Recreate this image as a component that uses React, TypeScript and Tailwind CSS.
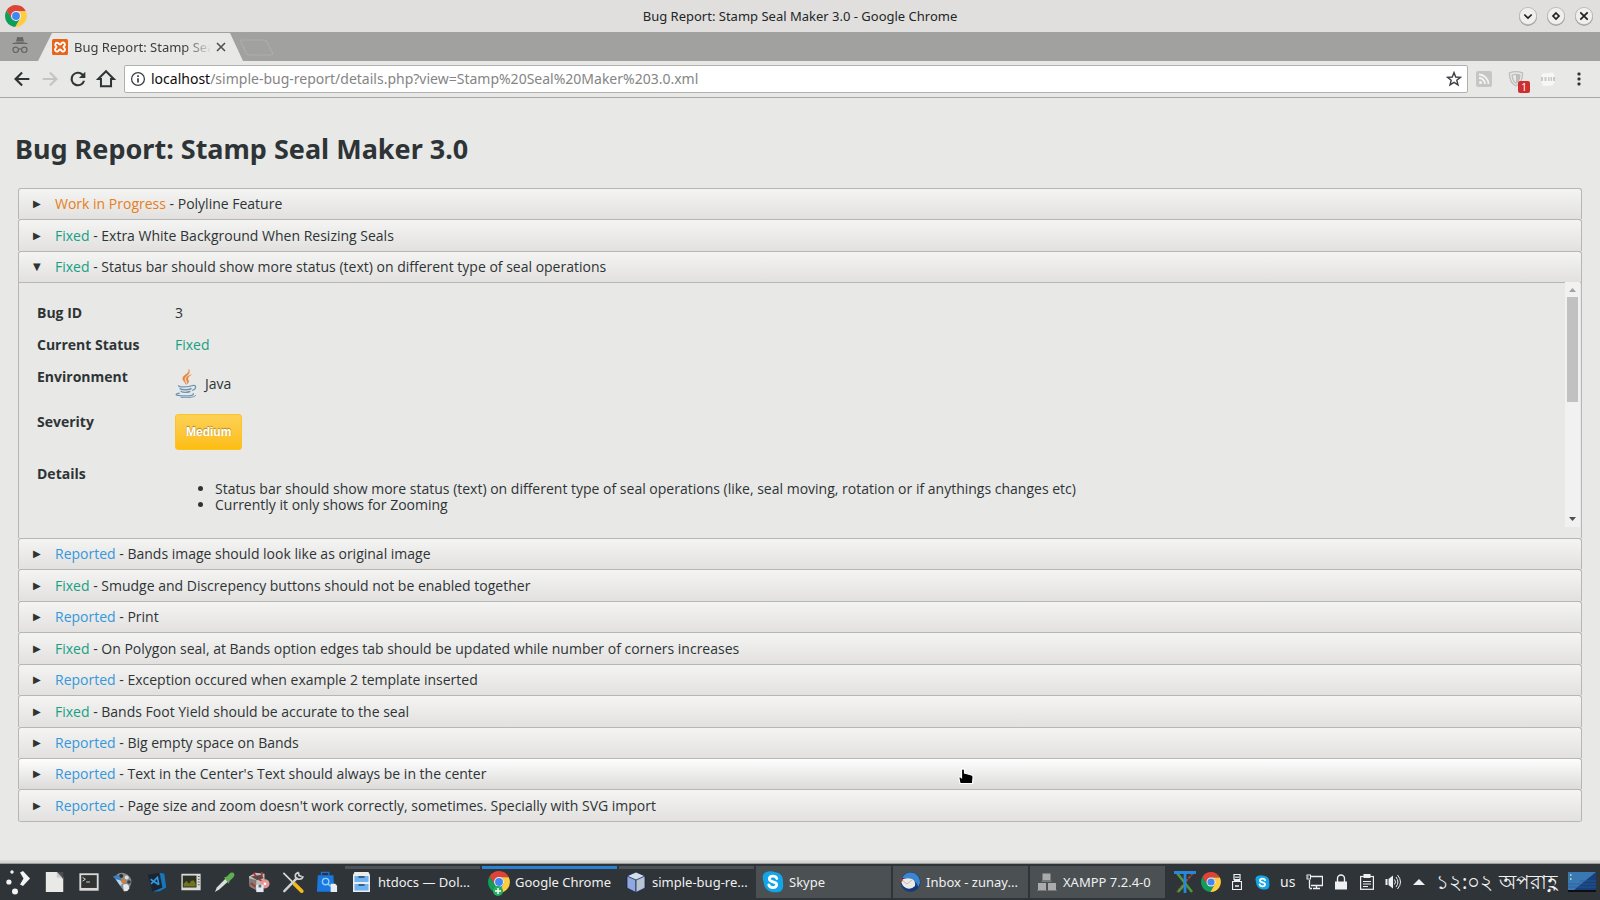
import { useState, type ReactNode } from 'react';

type Status = 'Work in Progress' | 'Fixed' | 'Reported';

const STATUS_COLOR: Record<Status, string> = {
  'Work in Progress': 'text-[#e67e22]',
  Fixed: 'text-[#16a085]',
  Reported: 'text-[#3498db]',
};

const BUGS: { status: Status; title: string }[] = [
  { status: 'Work in Progress', title: 'Polyline Feature' },
  { status: 'Fixed', title: 'Extra White Background When Resizing Seals' },
  { status: 'Fixed', title: 'Status bar should show more status (text) on different type of seal operations' },
  { status: 'Reported', title: 'Bands image should look like as original image' },
  { status: 'Fixed', title: 'Smudge and Discrepency buttons should not be enabled together' },
  { status: 'Reported', title: 'Print' },
  { status: 'Fixed', title: 'On Polygon seal, at Bands option edges tab should be updated while number of corners increases' },
  { status: 'Reported', title: 'Exception occured when example 2 template inserted' },
  { status: 'Fixed', title: 'Bands Foot Yield should be accurate to the seal' },
  { status: 'Reported', title: 'Big empty space on Bands' },
  { status: 'Reported', title: "Text in the Center's Text should always be in the center" },
  { status: 'Reported', title: "Page size and zoom doesn't work correctly, sometimes. Specially with SVG import" },
];

const HOVERED = 10;
const TALL_ROWS = [1, 4, 6, 8, 11];

function ChromeLogo({ className }: { className: string }) {
  return (
    <svg viewBox="0 0 48 48" className={className} aria-hidden="true">
      <path d="M24 0 A24 24 0 0 1 45.5 13.4 L24 13.4 L14 29.5 L3.2 12 A24 24 0 0 1 24 0Z" fill="#dd4437" />
      <path d="M3.2 12 A24 24 0 0 0 22.5 47.9 L33 29.5 L24 34.5 L15 29.5 Z" fill="#109d59" />
      <path d="M45.3 13.4 A24 24 0 0 1 22.5 47.9 L33.5 29 L33 18 L24 13.4 Z" fill="#fece40" />
      <circle cx="24" cy="24" r="10.8" fill="#f1f1f1" />
      <circle cx="24" cy="24" r="8.6" fill="#4286f5" />
    </svg>
  );
}

function JavaLogo() {
  return (
    <svg viewBox="0 0 22 30" className="h-[29px] w-[22px]" fill="none" strokeLinecap="round" aria-hidden="true">
      <path d="M14 0.500c2 4-6.400 5.500-6.400 9.300 0 2.400 2.400 3.400 3.400 6.200-.2-3-1.800-4-1.500-6C10 7.200 16.500 5.500 14 .5Z" fill="#e8833a" stroke="#e8833a" strokeWidth="0.500" />
      <path d="M16.200 6c-3.400 1.200-5.800 2.800-5 5.200.5 1.500 1.800 2 .6 4.600 3-2.400 1.800-4 1.200-5-.8-1.600.8-3 3.200-4.800Z" fill="#e8833a" stroke="#e8833a" strokeWidth="0.400" />
      <path d="M3.400 17.200c-1 1.600 10.600 1.800 13.400 0.200" stroke="#6f97b5" strokeWidth="1.300" />
      <path d="M17.600 17.200c4.600-1.400 4.400 3.600 0 4.800" stroke="#6f97b5" strokeWidth="1.300" />
      <path d="M5 20.400c1.400 1.400 8.600 1.400 11 0" stroke="#6f97b5" strokeWidth="1.700" />
      <path d="M6 23.300c1.600 1.200 6.600 1.200 9 0" stroke="#6f97b5" strokeWidth="1.500" />
      <path d="M4 25c-6.600 1.600-2 2.800 6 2.800 6 0 9.600-0.800 8.400-2.200" stroke="#6f97b5" strokeWidth="1.400" />
      <path d="M6 29.400c6 0.600 13.500 0.200 15-2" stroke="#6f97b5" strokeWidth="1" />
    </svg>
  );
}

function SkypeIcon({ className }: { className: string }) {
  return (
    <svg viewBox="0 0 24 24" className={className} aria-hidden="true">
      <path d="M5 1Q9-.2 14 1c7 1 9.500 6 8.800 11C24 19 22 23.500 16 23.200 8 24 2 19 1.800 12 0 7 .5 2 5 1Z" fill="#12a5ea" />
      <path d="M16.200 8.200C15.400 6.400 13.900 5.700 12 5.700c-2.400 0-4 1.100-4 3 0 4.200 8 2.100 8 6 0 2.100-1.800 3.400-4.100 3.400-2.300 0-3.900-.9-4.500-3" fill="none" stroke="#fff" strokeWidth="3" strokeLinecap="round" />
    </svg>
  );
}

function TitleBar() {
  return (
    <header className="flex h-8 shrink-0 items-center bg-[#e0dfde] px-[5px] text-[#232627]">
      <div className="flex w-[90px]">
        <ChromeLogo className="size-[22px]" />
      </div>
      <div className="flex-1 text-center text-[13px] leading-5">Bug Report: Stamp Seal Maker 3.0 - Google Chrome</div>
      <div className="flex w-[90px] justify-end gap-2 pr-px">
        {[
          ['Minimize', 'M6.3 8.5 10 12l3.7-3.5'],
          ['Maximize', 'M10 7l3 3-3 3-3-3Z'],
          ['Close', 'M6.3 6.3l7.4 7.400M13.7 6.3l-7.4 7.400'],
        ].map(([label, d]) => (
          <button key={label} type="button" aria-label={label} className="size-5 cursor-pointer">
            <svg viewBox="0 0 20 20" className="size-5" fill="none">
              <circle cx="10" cy="10.7" r="9" fill="#8f8f8e" />
              <circle cx="10" cy="10" r="8.600" fill="#f0efee" stroke="#b9b8b7" strokeWidth="0.8" />
              <path d={d} stroke="#1d1f20" strokeWidth="1.7" />
            </svg>
          </button>
        ))}
      </div>
    </header>
  );
}

function TabStrip() {
  return (
    <div className="flex h-[29px] shrink-0 items-end bg-[#a1a19f]">
      <div className="flex h-full w-[38px] items-center justify-center pb-[3px]">
        <svg viewBox="0 0 18 18" className="ml-[2px] size-[18px]" fill="none" aria-hidden="true">
          <path d="M5 5.5 6.2 1h1.600l1.200.6L10.2 1h1.600L13 5.5ZM1 8c0-1.200 4-1.800 8-1.800S17 6.800 17 8Z" fill="#666" />
          <circle cx="4.700" cy="13.800" r="2.700" stroke="#666" strokeWidth="1.200" />
          <circle cx="13.300" cy="13.800" r="2.700" stroke="#666" strokeWidth="1.200" />
          <path d="M7.400 13.400q1.600-1 3.200 0" stroke="#666" strokeWidth="1.200" />
        </svg>
      </div>
      <div className="flex h-7 w-[205px] items-center bg-[#e8e8e6] pb-px pl-[14px] [clip-path:polygon(14px_0,calc(100%-13px)_0,100%_100%,0_100%)]">
        <svg viewBox="0 0 16 16" className="size-4" aria-hidden="true">
          <rect width="16" height="16" rx="1.500" fill="#e9651c" />
          <path d="M5.200 3.600a2 2 0 0 0-1 3.700q.5.700 0 1.400a2 2 0 1 0 2.800 2.200q1-.8 2 0a2 2 0 1 0 2.800-2.200q-.5-.7 0-1.400A2 2 0 1 0 9 5.100q-1 .8-2 0a2 2 0 0 0-1.800-1.500Z" fill="none" stroke="#fff" strokeWidth="1.900" />
        </svg>
        <span className="ml-[6px] w-[136px] overflow-hidden text-[13px] leading-5 whitespace-nowrap text-[#3a3d3f] [mask-image:linear-gradient(to_right,#000_110px,transparent_138px)]">
          Bug Report: Stamp Seal Maker 3.0
        </span>
        <button type="button" aria-label="Close tab" className="ml-[5px] flex size-3 items-center justify-center">
          <svg viewBox="0 0 10 10" className="size-[10px]">
            <path d="M1 1l8 8M9 1 1 9" stroke="#4e5153" strokeWidth="1.600" />
          </svg>
        </button>
      </div>
      <button type="button" aria-label="New tab" className="mb-1 -ml-1">
        <svg viewBox="0 0 36 18" className="h-[18px] w-9" fill="none">
          <path d="M3 1h22q2 0 3 2l5.500 11q1 2-1.500 2H10q-2 0-3-2L2 3Q1.500 1 3 1Z" stroke="#adadab" strokeWidth="1.200" />
        </svg>
      </button>
    </div>
  );
}

function ToolButton({ label, color, children }: { label: string; color: string; children: ReactNode }) {
  return (
    <button type="button" aria-label={label} className={`flex w-7 justify-center ${color}`}>
      <svg viewBox="0 0 24 24" className="size-[22px]" fill="currentColor">
        {children}
      </svg>
    </button>
  );
}

function Toolbar() {
  const arrowBack = 'M20 10.800H7.830l5.090-5.090L11.300 4 3.300 12l8 8 1.620-1.710-5.090-5.090H20z';
  return (
    <div className="flex h-[37px] shrink-0 items-center border-b border-[#a9a9a7] bg-[#e8e8e6] pr-[13px] pl-2">
      <ToolButton label="Back" color="text-[#2e3436]">
        <path d={arrowBack} />
      </ToolButton>
      <ToolButton label="Forward" color="text-[#c4c4c3]">
        <path d={arrowBack} transform="matrix(-1 0 0 1 24 0)" />
      </ToolButton>
      <ToolButton label="Reload" color="text-[#2e3436]">
        <path d="M17.650 6.350A8 8 0 1 0 19.730 14h-2.400A5.700 5.700 0 1 1 12 6.300c1.560 0 2.960.7 4.020 1.700L13 11h7V4z" />
      </ToolButton>
      <ToolButton label="Home" color="text-[#2e3436]">
        <path d="M12 3.500 3.500 12H6.500v8h11v-8h3Z" fill="none" stroke="currentColor" strokeWidth="2.200" />
      </ToolButton>
      <div className="ml-1 flex h-7 flex-1 items-center rounded-[2px] border border-[#b0b0ae] bg-white px-[5px]">
        <svg viewBox="0 0 16 16" className="size-4" fill="none" aria-hidden="true">
          <circle cx="8" cy="8" r="6.400" stroke="#3c4043" strokeWidth="1.300" />
          <path d="M8 7.200v4.300M8 4.300v1.600" stroke="#3c4043" strokeWidth="1.700" />
        </svg>
        <a
          href="http://localhost/simple-bug-report/details.php?view=Stamp%20Seal%20Maker%203.0.xml"
          className="ml-[5px] flex-1 text-[14px] leading-5 whitespace-nowrap text-[#858585]"
        >
          <span className="text-[#0c0c0c]">localhost</span>/simple-bug-report/details.php?view=Stamp%20Seal%20Maker%203.0.xml
        </a>
        <button type="button" aria-label="Bookmark this page">
          <svg viewBox="0 0 16 16" className="size-4" fill="none">
            <path d="M8 1.600 9.700 6l4.700.3-3.600 3 1.200 4.600L8 11.300l-4 2.600 1.200-4.600-3.600-3L6.300 6Z" stroke="#3c4043" strokeWidth="1.400" />
          </svg>
        </button>
      </div>
      <div className="flex items-center pl-2">
        <svg viewBox="0 0 16 16" className="size-4" fill="none" aria-hidden="true">
          <rect width="16" height="16" rx="2" fill="#c6c6c5" />
          <circle cx="4.500" cy="11.500" r="1.500" fill="#f4f4f4" />
          <path d="M3 7a6 6 0 0 1 6 6M3 3.500A9.500 9.500 0 0 1 12.500 13" stroke="#f4f4f4" strokeWidth="1.800" />
        </svg>
        <div className="relative ml-4 size-4">
          <svg viewBox="0 0 16 16" className="size-4" fill="none" aria-hidden="true">
            <path d="M1.500 1.800Q8-.4 14.500 1.800 15 11.500 8 15 1 11.500 1.500 1.800Z" stroke="#bdbdbc" strokeWidth="1.300" />
            <path d="M4.200 4Q8 2.800 11.800 4 12 9.500 8 12.300 4 9.500 4.200 4Z" stroke="#bdbdbc" strokeWidth="1.300" />
            <path d="M8 3.400v8.600Q11.800 9 11.700 4.200Z" fill="#bdbdbc" />
          </svg>
          <span className="absolute top-[10px] left-[10px] flex h-3 w-3 items-center justify-center rounded-[2px] bg-[#cf2e2e] text-[10px] leading-3 text-white">
            1
          </span>
        </div>
        <svg viewBox="0 0 16 16" className="ml-4 size-4" aria-hidden="true">
          <path d="M3 2.500 13 1.500 14.500 5v7L12 14.500 3 15 1.500 11V4Z" fill="#f7f7f6" />
          <path d="M1 6h2v4H1zM4.500 6h2v4h-2zM8 6h1.500v4H8zM10.500 6h1.500v4h-1.500zM13 6h2v4h-2z" fill="#c9c9c8" />
        </svg>
        <button type="button" aria-label="Menu" className="ml-[15px]">
          <svg viewBox="0 0 16 16" className="size-4" fill="#2e3436">
            <rect x="6.500" y="1.500" width="3" height="3" rx="1" />
            <rect x="6.500" y="6.500" width="3" height="3" rx="1" />
            <rect x="6.500" y="11.500" width="3" height="3" rx="1" />
          </svg>
        </button>
      </div>
    </div>
  );
}

function BugDetails() {
  return (
    <div className="flex h-[255px] border-x border-[#b6b6b4]">
      <dl className="grid h-[245px] flex-1 grid-cols-[138px_1fr] content-start gap-y-4 overflow-hidden pt-[22px] pl-[18px] text-sm leading-4">
        <dt className="font-bold">Bug ID</dt>
        <dd>3</dd>
        <dt className="font-bold">Current Status</dt>
        <dd className="text-[#16a085]">Fixed</dd>
        <dt className="font-bold">Environment</dt>
        <dd className="flex items-center gap-2">
          <JavaLogo />
          Java
        </dd>
        <dt className="font-bold">Severity</dt>
        <dd>
          <button
            type="button"
            className="block h-9 rounded-[3px] border border-[#fcc322] bg-linear-to-b from-[#fdd153] to-[#fdbd08] px-[10px] font-['Liberation_Sans',sans-serif] text-xs font-bold text-white [text-shadow:0_-1px_1px_rgba(0,0,0,0.35)]"
          >
            Medium
          </button>
        </dd>
        <dt className="font-bold">Details</dt>
        <dd>
          <ul className="list-disc pt-[15px] pl-10">
            <li>
              Status bar should show more status (text) on different type of seal operations (like, seal moving, rotation or if
              anythings changes etc)
            </li>
            <li>Currently it only shows for Zooming</li>
          </ul>
        </dd>
      </dl>
      <div className="-mt-px mr-px flex h-[245px] w-[15px] flex-col items-center bg-[#f1f1f1]" aria-hidden="true">
        <svg viewBox="0 0 15 15" className="size-[15px]">
          <path d="M4 10h7L7.500 6Z" fill="#a3a3a3" />
        </svg>
        <div className="h-[105px] w-[11px] bg-[#c1c1c1]" />
        <svg viewBox="0 0 15 15" className="mt-auto size-[15px]">
          <path d="M4 5h7L7.500 9Z" fill="#505050" />
        </svg>
      </div>
    </div>
  );
}

function Accordion() {
  const [open, setOpen] = useState(2);
  return (
    <div className="rounded-[3px] border-b border-[#b6b6b4] font-['Open_Sans',sans-serif]">
      {BUGS.map((bug, i) => {
        const isOpen = i === open;
        const fill = i === HOVERED ? 'from-[#fefefe] to-[#dcdbda]' : 'from-[#f4f4f2] to-[#e2e1df]';
        const height = TALL_ROWS.includes(i) ? 'h-8' : 'h-[31px]';
        return (
          <section key={bug.title}>
            <h2>
              <button
                type="button"
                aria-expanded={isOpen}
                onClick={() => setOpen(isOpen ? -1 : i)}
                className={`flex w-full items-center rounded-t-[3px] border border-b-0 border-[#b6b6b4] bg-linear-to-b text-left text-sm leading-5 ${fill} ${height}`}
              >
                <span className="w-9 pl-[14px] font-['DejaVu_Sans',sans-serif] text-[10px]" aria-hidden="true">
                  {isOpen ? '▼' : '▶'}
                </span>
                <span>
                  <span className={STATUS_COLOR[bug.status]}>{bug.status}</span> - {bug.title}
                </span>
              </button>
            </h2>
            {isOpen && (
              <div className="border-t border-[#b6b6b4]">
                <BugDetails />
              </div>
            )}
          </section>
        );
      })}
    </div>
  );
}

const LAUNCHERS: { label: string; art: ReactNode }[] = [
  {
    label: 'LibreOffice',
    art: (
      <>
        <path d="M2 1h13l6 6v16H2Z" fill="#e9e9e8" />
        <path d="M14 1h7v8Z" fill="#4a4d4f" />
        <path d="M14 1v6h6" fill="#c8c8c7" />
      </>
    ),
  },
  {
    label: 'Terminal',
    art: (
      <>
        <rect x="1.500" y="2.500" width="21" height="19" fill="#d9dad8" />
        <rect x="3.500" y="4.500" width="17" height="14" fill="#30332f" />
        <path d="M5 7l3 2-3 2M9 12h4" stroke="#e8e8e8" fill="none" />
      </>
    ),
  },
  {
    label: 'Image editor',
    art: (
      <>
        <path d="M5 4q5-4 12 0 5 4 4 9-2 8-8 9L6 12Z" fill="#8a8c8b" />
        <circle cx="10" cy="5.500" r="2.200" fill="#2d2f30" />
        <circle cx="16" cy="7" r="2.200" fill="#dcdcdc" />
        <circle cx="18.500" cy="12" r="2" fill="#3a3c3d" />
        <path d="M1 6 6 4l6 7-3 4Z" fill="#3f7fc0" />
        <path d="M4 9l5 1 3 3-3 3Z" fill="#b4d4ef" />
        <circle cx="12.500" cy="11" r="2.400" fill="#e8762b" />
        <path d="M12 15q6-3 7 4-2 4-6 3Z" fill="#e5e7ee" />
      </>
    ),
  },
  {
    label: 'Visual Studio Code',
    art: (
      <>
        <path d="M2 4l12-2 4 18-11 3Z" fill="#1d2430" />
        <path d="M15 2l5 1 2 15-7 4-8 .5L18 18Z" fill="#1478bf" />
        <path d="M5 9l9 6M5.500 14l7-7 1.500 8" stroke="#2b9be6" strokeWidth="1.700" fill="none" />
      </>
    ),
  },
  {
    label: 'System monitor',
    art: (
      <>
        <rect x="1.500" y="3" width="21" height="18" fill="#dcdcd6" />
        <rect x="3" y="5" width="15" height="13" fill="#2d3024" />
        <path d="M4 17v-3l3-3 3 3 2-3 3-1 2 4v3Z" fill="#70761f" />
        <path d="M19.500 6h2M19.500 9h2M19.500 12h2M19.500 15h2" stroke="#55574f" />
      </>
    ),
  },
  {
    label: 'Color picker',
    art: (
      <>
        <path d="M1 23l2-5 10-10 3 3-10 9Z" fill="#d9dedb" />
        <path d="M11 7l3-1 4-4q3-1 4 1 1 2-1 4l-4 4-1 3Z" fill="#5fae52" />
      </>
    ),
  },
  {
    label: 'Screenshot',
    art: (
      <>
        <path d="M1 6l7-4 10 1v15l-8 3-8-4Z" fill="#c3bfbd" />
        <path d="M1 8l8 2v11l-7-4Z" fill="#817b79" />
        <path d="M3 6 15 4l2 4-7 2Z" fill="#514a49" />
        <path d="M6 2l3 4M15 1v5M3 13l5 4M12 9l3 2" stroke="#b8322c" strokeWidth="2" fill="none" />
        <circle cx="18.500" cy="14" r="5" fill="#e59592" />
        <circle cx="18.500" cy="14" r="1.500" fill="#fff" />
        <rect x="9" y="15" width="8" height="8" fill="#e6eaf0" />
        <rect x="11.500" y="15" width="3" height="3" fill="#5a6a80" />
      </>
    ),
  },
  {
    label: 'Settings',
    art: (
      <>
        <path d="M1.500 2l11 11" stroke="#d8dadb" strokeWidth="1.800" />
        <path d="M13.500 14l8 8" stroke="#f5b81c" strokeWidth="4" strokeLinecap="round" />
        <path d="M2.500 22 16 8" stroke="#cfd1d2" strokeWidth="2.600" strokeLinecap="round" />
        <path d="M18 1.500q-4 1.500-3.500 4.500t4.500 3q3.500-.5 4-3.500M18 1.500l.5 3.500 3 1" stroke="#cfd1d2" strokeWidth="1.800" fill="none" />
      </>
    ),
  },
  {
    label: 'Software center',
    art: (
      <>
        <path d="M6 5V1.500h8V5" stroke="#1f6fd0" strokeWidth="1.500" fill="none" />
        <path d="M2 4.500h17l1 18H1Z" fill="#1a78e0" />
        <circle cx="10.500" cy="11.500" r="3.500" stroke="#8fd0ff" strokeWidth="1.500" fill="none" />
        <path d="M13 14l3 3" stroke="#8fd0ff" strokeWidth="1.500" />
        <path d="M16 14h5l2 2v7h-7Z" fill="#e9edf2" />
      </>
    ),
  },
];

const TASKS: { title: string; state: 'normal' | 'active' | 'minimized'; icon: ReactNode }[] = [
  {
    title: 'htdocs — Dol...',
    state: 'normal',
    icon: (
      <svg viewBox="0 0 22 22" className="size-[22px]">
        <path d="M3.500 1h14l1.500 3v17H2V4Z" fill="#eceded" />
        <rect x="3.500" y="5" width="14" height="6" fill="#6fb2f2" />
        <rect x="3.500" y="13" width="14" height="6.500" fill="#6fb2f2" />
        <path d="M7.500 6h6M7.500 14h6" stroke="#26455f" strokeWidth="1.600" />
      </svg>
    ),
  },
  {
    title: 'Google Chrome',
    state: 'active',
    icon: (
      <span className="relative block">
        <ChromeLogo className="size-[22px]" />
        <svg viewBox="0 0 10 10" className="absolute top-[15px] left-[5px] size-[10px]">
          <circle cx="5" cy="5" r="5" fill="#27ae60" />
          <path d="M5 2v6M2 5h6" stroke="#fff" strokeWidth="1.400" />
        </svg>
      </span>
    ),
  },
  {
    title: 'simple-bug-re...',
    state: 'normal',
    icon: (
      <svg viewBox="0 0 22 22" className="size-[22px]" stroke="#1e2450" strokeWidth="0.800">
        <path d="M11 1l9 4v12l-9 4.500L2 17V5Z" fill="#cfe0ea" />
        <path d="M2 5l9 4v12.500L2 17Z" fill="#8fa9de" />
        <path d="M20 5l-9 4v12.500l9-4.500Z" fill="#b6c4d0" />
      </svg>
    ),
  },
  { title: 'Skype', state: 'minimized', icon: <SkypeIcon className="size-[22px]" /> },
  {
    title: 'Inbox - zunay...',
    state: 'minimized',
    icon: (
      <svg viewBox="0 0 22 22" className="size-[22px]">
        <circle cx="11.500" cy="11" r="10" fill="#183a78" />
        <path d="M3 7q4-7 12-5 6 3 6 10-1 3-2 4Q18 8 3 7Z" fill="#3c86cf" />
        <path d="M2 9q5-3 11-1 4 2 3 7-4 4-9 2-5-3-5-8Z" fill="#eceae6" />
        <path d="M3 9l5 4 5-4" stroke="#c9b9a6" fill="none" />
        <path d="M1 7l3 1-1 3-2-1Z" fill="#9e3b35" />
      </svg>
    ),
  },
  {
    title: 'XAMPP 7.2.4-0',
    state: 'minimized',
    icon: (
      <svg viewBox="0 0 22 22" className="size-[22px]" fill="#a9abac">
        <rect x="6.500" y="2.500" width="8" height="7" />
        <rect x="2" y="12" width="8" height="7" />
        <rect x="12" y="12" width="8" height="7" />
        <path d="M5.500 9.500h10v1.500h-10zM1 19h10v1H1zM12 19h9v1h-9z" fill="#77797a" />
      </svg>
    ),
  },
];

const TASK_STYLE = {
  normal: 'border-t-[3px] border-[#4d5256] pb-[3px]',
  active: 'border-t-[3px] border-[#2980d4] pb-[3px]',
  minimized: 'bg-[#4b5053]',
};

function Tray() {
  return (
    <div className="flex h-full flex-1 items-center pl-[9px] text-[#eff0f1]">
      <svg viewBox="0 0 22 22" className="size-[22px]" fill="none" aria-hidden="true">
        <path d="M3 2 18 21" stroke="#4f9a3e" strokeWidth="2.500" />
        <path d="M19 2 3 21" stroke="#9b4a32" strokeWidth="2" strokeDasharray="3 1" />
        <path d="M12 12 4 21" stroke="#4f9a3e" strokeWidth="2.500" />
        <path d="M0 1.500h22M11 2v20" stroke="#2a86dc" strokeWidth="2.800" />
      </svg>
      <ChromeLogo className="ml-[5px] size-5" />
      <svg viewBox="0 0 10 16" className="ml-[11px] h-4 w-[10px]" fill="none" stroke="#eff0f1" aria-hidden="true">
        <path d="M2 6V.5h6V6M.5 7.500h9v8h-9Z" strokeWidth="1.200" />
        <path d="M4 2.500v1.500M6 2.500v1.500M3 12h4" strokeWidth="1.500" />
        <path d="M2 6h6" strokeWidth="2" />
      </svg>
      <SkypeIcon className="ml-[13px] size-[15px]" />
      <span className="ml-[10px] w-[18px] text-sm leading-4">us</span>
      <svg viewBox="0 0 17 16" className="ml-[8px] h-4 w-[17px]" fill="none" stroke="#eff0f1" aria-hidden="true">
        <path d="M5 2.500h11.500v9H5M3.500 6v8M3.500 14.500H6M7 14.500h7M10.500 12v2" strokeWidth="1.300" />
        <rect x="1" y="1" width="3.500" height="4" />
        <path d="M2 2.500v1" />
      </svg>
      <svg viewBox="0 0 12 16" className="ml-3 h-4 w-3" aria-hidden="true">
        <path d="M2.500 8V4.500a3.500 3.500 0 0 1 7 0V8" stroke="#eff0f1" strokeWidth="1.400" fill="none" />
        <rect y="7.500" width="12" height="8" fill="#eff0f1" />
      </svg>
      <svg viewBox="0 0 14 16" className="ml-[13px] h-4 w-[14px]" fill="none" stroke="#eff0f1" aria-hidden="true">
        <rect x=".6" y="2.500" width="12.800" height="12.800" strokeWidth="1.200" />
        <path d="M3.500 2h7" strokeWidth="4" />
        <path d="M3 7.500h8M3 10h8M3 12.500h5" />
      </svg>
      <svg viewBox="0 0 17 16" className="ml-[11px] h-4 w-[17px]" fill="none" stroke="#eff0f1" aria-hidden="true">
        <path d="M.500 5h2v6h-2z" fill="#eff0f1" stroke="none" />
        <path d="M3.500 5 8 1.500v13L3.500 11Z" fill="#eff0f1" stroke="none" />
        <path d="M9.500 5.500q2 2.500 0 5M11 3q3.800 5 0 10M12.500 1q6 7 0 14" />
      </svg>
      <svg viewBox="0 0 12 6" className="ml-[11px] h-[6px] w-3" fill="#eff0f1" aria-hidden="true">
        <path d="M0 6h12L6 0Z" />
      </svg>
      <time className="ml-[11px] flex-1 text-xl leading-7 whitespace-nowrap">১২:০২ অপরাহ্ণ</time>
      <svg viewBox="0 0 28 20" className="mr-1 h-5 w-7" aria-hidden="true">
        <rect width="28" height="20" fill="#3a78b4" />
        <path d="M28 0v18H6Z" fill="#173f7c" />
        <path d="M0 12h28M0 15h28M12 9h16" stroke="#2b5c99" strokeWidth="0.700" />
        <rect y="18" width="28" height="2" fill="#0b0e12" />
        <path d="M2 3h1.500M2 7h1.500" stroke="#e4e6a0" strokeWidth="1.500" />
      </svg>
    </div>
  );
}

function Taskbar() {
  return (
    <footer className="shrink-0 bg-[#2f3438]">
      <div className="h-1 border-b border-[#9d9d9b] bg-linear-to-b from-[#dededc] to-[#cfcfcd]" />
      <div className="flex h-9 items-center">
        <button type="button" aria-label="Application launcher" className="flex w-[38px] justify-center">
          <svg viewBox="0 0 26 26" className="size-[26px]" fill="#f4f4f4">
            <circle cx="6" cy="3" r="1.700" />
            <circle cx="2.900" cy="13" r="2.600" />
            <circle cx="9" cy="22.500" r="3" />
            <path d="M14 3.500l3-1.500 7 7.500-7 7.500-3-1.500 3.500-6Z" />
          </svg>
        </button>
        {LAUNCHERS.map((item) => (
          <button key={item.label} type="button" aria-label={item.label} className="flex w-[34px] justify-center">
            <svg viewBox="0 0 24 24" className="size-[22px]">
              {item.art}
            </svg>
          </button>
        ))}
        <div className="ml-px flex h-8 gap-[2px]">
          {TASKS.map((task) => (
            <button
              key={task.title}
              type="button"
              className={`flex w-[135px] items-center gap-[5px] pl-[6px] text-left text-[13px] leading-5 text-[#eff0f1] ${TASK_STYLE[task.state]}`}
            >
              {task.icon}
              <span className="whitespace-nowrap">{task.title}</span>
            </button>
          ))}
        </div>
        <Tray />
      </div>
    </footer>
  );
}

function HandCursor() {
  return (
    <svg viewBox="0 0 16 17" className="pointer-events-none absolute top-[768px] left-[958px] h-[17px] w-4" aria-hidden="true">
      <path
        d="M3.500 1.500q1.500-1.500 3 0V5l7 2q2 .5 1.500 3l-.5 5.500H2L.8 9.500 2 8.500l1.500 1.200Z"
        fill="#000"
        stroke="#fff"
        strokeWidth="1.200"
      />
    </svg>
  );
}

export default function App() {
  return (
    <div className="relative flex min-h-screen flex-col bg-[#e8e8e6] font-['Noto_Sans',sans-serif] text-[#2e3436]">
      <TitleBar />
      <TabStrip />
      <Toolbar />
      <main className="flex-1 px-[18px] pt-[33px]">
        <h1 className="-ml-[3px] mb-[21px] text-[27px] leading-9 font-bold">Bug Report: Stamp Seal Maker 3.0</h1>
        <Accordion />
      </main>
      <Taskbar />
      <HandCursor />
    </div>
  );
}
